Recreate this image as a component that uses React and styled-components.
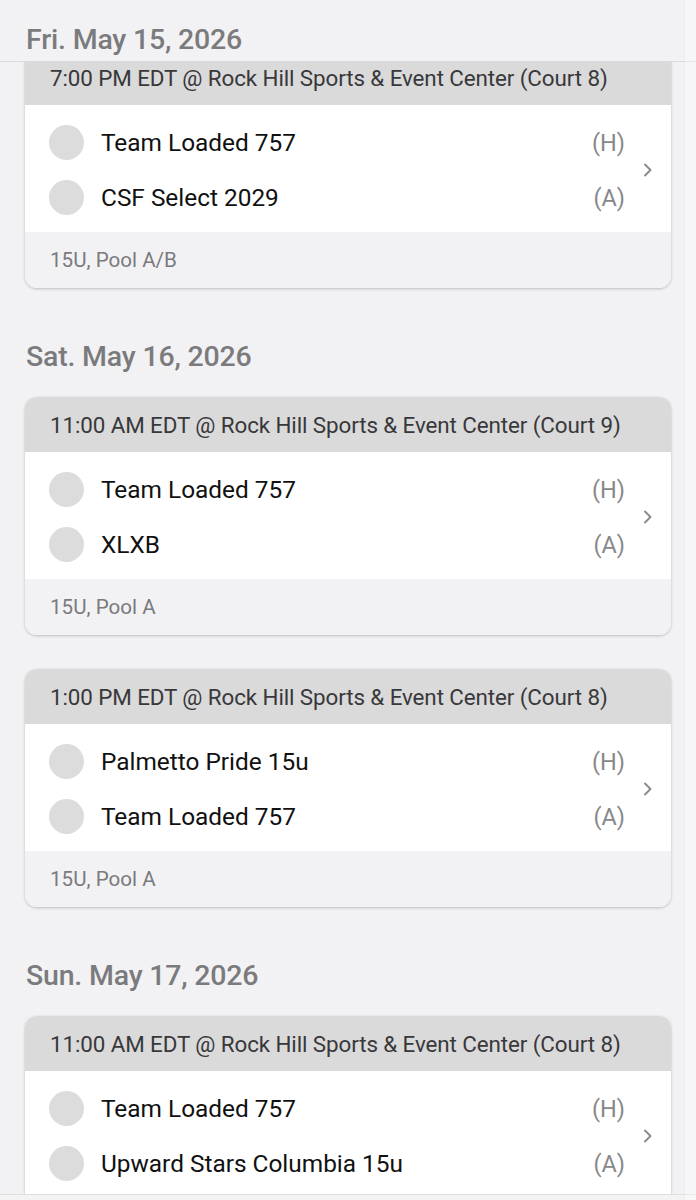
import React from "react";
import styled, { createGlobalStyle } from "styled-components";

const GlobalStyle = createGlobalStyle`
  html, body {
    margin: 0;
    padding: 0;
    background: #f2f2f4;
    font-family: Roboto, "Noto Sans", "Liberation Sans", sans-serif;
    overflow: hidden;
    height: 1200px;
  }
`;

const Page = styled.div`
  width: 696px;
  height: 1200px;
  display: flex;
  flex-direction: column;
  background: #f2f2f4;
  overflow: hidden;
  position: relative;
`;

const StickyHeader = styled.div`
  height: 62px;
  flex-shrink: 0;
  display: flex;
  align-items: flex-end;
  box-sizing: border-box;
  padding: 0 26px 4px;
  border-bottom: 1px solid #d9d9db;
  background: #f2f2f4;
  position: relative;
  z-index: 2;
`;

const DateTitle = styled.h2`
  margin: 0;
  font-size: 28.5px;
  font-weight: 500;
  color: #7b7b7d;
  line-height: 34px;
  letter-spacing: -0.2px;
`;

const Viewport = styled.div`
  flex: 1;
  overflow: hidden;
`;

const Scroller = styled.div`
  margin-top: -12px;
  padding: 0 25px;
`;

const Section = styled.section`
  display: flex;
  flex-direction: column;
  gap: 34px;
  margin-top: ${(p) => (p.first ? "0" : "52px")};
`;

const SectionTitle = styled(DateTitle)`
  padding-left: 1px;
  margin-bottom: -11px;
`;

const Card = styled.div`
  background: #fff;
  border-radius: 12px;
  overflow: hidden;
  box-shadow: 0 1px 3px rgba(0, 0, 0, 0.22), 0 0 1px rgba(0, 0, 0, 0.08);
`;

const CardHeader = styled.div`
  height: 55px;
  display: flex;
  align-items: center;
  padding: 0 25px;
  background: #dadadb;
  font-size: 22.4px;
  color: #38383a;
  white-space: nowrap;
  letter-spacing: -0.1px;
`;

const CardBody = styled.div`
  display: flex;
  align-items: center;
  padding: 10px 0 7px;
  background: #fff;
`;

const Teams = styled.div`
  flex: 1;
  display: flex;
  flex-direction: column;
  padding-left: 24px;
`;

const TeamRow = styled.div`
  height: 55px;
  display: flex;
  align-items: center;
`;

const Logo = styled.div`
  width: 35px;
  height: 35px;
  border-radius: 50%;
  background: #dcdcdd;
  flex-shrink: 0;
`;

const TeamName = styled.span`
  flex: 1;
  margin-left: 17px;
  font-size: 24.4px;
  color: #111;
`;

const Side = styled.span`
  font-size: 23.5px;
  color: #88888a;
`;

const Chevron = styled.div`
  width: 46px;
  display: flex;
  justify-content: center;
  color: #8a8a8c;
`;

const CardFooter = styled.div`
  height: 56px;
  display: flex;
  align-items: center;
  padding: 0 25px;
  background: #f2f2f4;
  font-size: 20.6px;
  color: #7a7a7c;
`;

const BottomBar = styled.div`
  position: absolute;
  left: 0;
  right: 0;
  bottom: 0;
  height: 5px;
  background: #f3f3f4;
  border-top: 1px solid #dedee0;
  z-index: 3;
`;

const ScrollTrack = styled.div`
  position: absolute;
  top: 0;
  bottom: 0;
  right: 0;
  width: 11px;
  background: rgba(255, 255, 255, 0.35);
  border-left: 1px solid rgba(0, 0, 0, 0.03);
  z-index: 4;
`;

const ChevronIcon = () => (
  <svg width="12" height="18" viewBox="0 0 12 18" fill="none">
    <path d="M3 3.5 L8.5 9 L3 14.5" stroke="currentColor" strokeWidth="1.9" strokeLinecap="round" strokeLinejoin="round" />
  </svg>
);

const days = [
  {
    date: "Fri. May 15, 2026",
    games: [
      {
        time: "7:00 PM EDT @ Rock Hill Sports & Event Center (Court 8)",
        home: "Team Loaded 757",
        away: "CSF Select 2029",
        pool: "15U, Pool A/B",
      },
    ],
  },
  {
    date: "Sat. May 16, 2026",
    games: [
      {
        time: "11:00 AM EDT @ Rock Hill Sports & Event Center (Court 9)",
        home: "Team Loaded 757",
        away: "XLXB",
        pool: "15U, Pool A",
      },
      {
        time: "1:00 PM EDT @ Rock Hill Sports & Event Center (Court 8)",
        home: "Palmetto Pride 15u",
        away: "Team Loaded 757",
        pool: "15U, Pool A",
      },
    ],
  },
  {
    date: "Sun. May 17, 2026",
    games: [
      {
        time: "11:00 AM EDT @ Rock Hill Sports & Event Center (Court 8)",
        home: "Team Loaded 757",
        away: "Upward Stars Columbia 15u",
        pool: "15U, Pool A",
      },
    ],
  },
];

const GameCard = ({ game }) => (
  <Card>
    <CardHeader>{game.time}</CardHeader>
    <CardBody>
      <Teams>
        <TeamRow>
          <Logo />
          <TeamName>{game.home}</TeamName>
          <Side>(H)</Side>
        </TeamRow>
        <TeamRow>
          <Logo />
          <TeamName>{game.away}</TeamName>
          <Side>(A)</Side>
        </TeamRow>
      </Teams>
      <Chevron>
        <ChevronIcon />
      </Chevron>
    </CardBody>
    <CardFooter>{game.pool}</CardFooter>
  </Card>
);

export default function App() {
  return (
    <Page>
      <GlobalStyle />
      <StickyHeader>
        <DateTitle>{days[0].date}</DateTitle>
      </StickyHeader>
      <Viewport>
        <Scroller>
          {days.map((day, i) => (
            <Section key={day.date} first={i === 0}>
              {i > 0 && <SectionTitle>{day.date}</SectionTitle>}
              {day.games.map((g) => (
                <GameCard key={g.time} game={g} />
              ))}
            </Section>
          ))}
        </Scroller>
      </Viewport>
      <ScrollTrack />
      <BottomBar />
    </Page>
  );
}
